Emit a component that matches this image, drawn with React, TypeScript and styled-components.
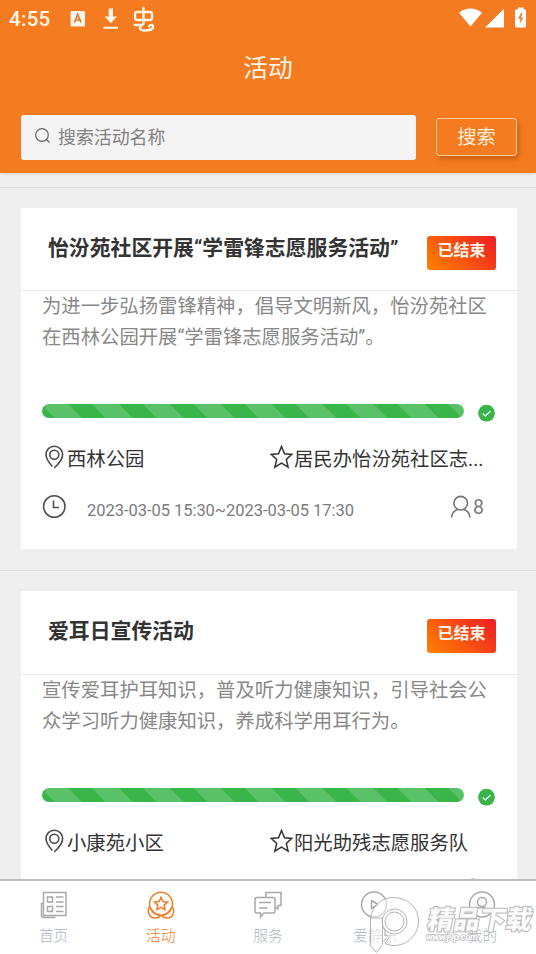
import React from "react";
import styled, { createGlobalStyle } from "styled-components";

const ORANGE = "#f47b1f";

const GlobalStyle = createGlobalStyle`
  * { box-sizing: border-box; }
  body {
    margin: 0;
    background: #efefef;
    font-family: Roboto, "Noto Sans CJK SC", sans-serif;
    color: #333;
  }
`;

const Screen = styled.div`
  position: relative;
  width: 536px;
  height: 954px;
  overflow: hidden;
  display: flex;
  flex-direction: column;
  background: #efefef;
`;

const Header = styled.header`
  flex: none;
  height: 173px;
  background: ${ORANGE};
  color: #fff5e8;
  box-shadow: 0 1px 3px rgba(0, 0, 0, 0.12);
`;

const StatusBar = styled.div`
  height: 37px;
  padding: 0 8px 0 9px;
  display: flex;
  align-items: center;
  justify-content: space-between;
`;

const StatusGroup = styled.div`
  display: flex;
  align-items: center;
`;

const Time = styled.span`
  width: 61px;
  font-size: 20.5px;
  font-weight: 500;
  letter-spacing: 0.3px;
  line-height: 37px;
  padding-top: 1px;
`;

const Title = styled.h1`
  margin: 0;
  height: 60px;
  font-size: 24.7px;
  font-weight: 400;
  line-height: 63px;
  text-align: center;
`;

const SearchRow = styled.div`
  display: flex;
  align-items: center;
  padding: 18px 19px 0 21px;
  justify-content: space-between;
`;

const SearchField = styled.div`
  width: 395px;
  height: 45px;
  padding: 0 0 4px 14px;
  display: flex;
  align-items: center;
  gap: 7px;
  border-radius: 3px;
  background: #f4f4f4;
  color: #808080;
  font-size: 17.9px;
`;

const SearchButton = styled.button`
  width: 81px;
  height: 38px;
  margin-bottom: 1px;
  padding: 0 0 2px;
  border: 1px solid #ffc792;
  border-radius: 3px;
  background: ${ORANGE};
  box-shadow: 2px 3px 4px rgba(120, 50, 0, 0.35);
  color: #fff0dd;
  font: 400 19.3px Roboto, "Noto Sans CJK SC", sans-serif;
`;

const Feed = styled.main`
  flex: 1;
  min-height: 0;
  overflow: hidden;
  padding-top: 14px;
`;

const Entry = styled.section`
  height: 383.4px;
  padding: 20px 19px 0 21px;
  border-top: 1px solid #dedede;
`;

const Card = styled.article`
  height: 341.4px;
  background: #fff;
`;

const CardHead = styled.div`
  height: 83.3px;
  padding: 0 21px 0 27px;
  display: flex;
  justify-content: space-between;
  border-bottom: 1px solid #e9e9e9;
`;

const CardTitle = styled.h2`
  margin: 0;
  padding-top: 25px;
  font-size: 20.85px;
  line-height: 31px;
  font-weight: 700;
  white-space: nowrap;
`;

const Badge = styled.span`
  width: 69px;
  height: 34px;
  margin-top: 28px;
  border-radius: 3px;
  background: linear-gradient(45deg, #ff8300, #ee1c25);
  color: #fff3e6;
  font-size: 16px;
  font-weight: 700;
  line-height: 29px;
  text-align: center;
`;

const Summary = styled.p`
  margin: 0;
  height: 113px;
  padding: 0 21px;
  color: #888;
  font-size: 19.35px;
  line-height: 31px;
  white-space: nowrap;
`;

const Progress = styled.div`
  display: flex;
  align-items: flex-start;
  padding: 0 22px 0 21px;
  justify-content: space-between;
`;

const Bar = styled.div`
  width: 422px;
  height: 14px;
  border-radius: 7px;
  background: repeating-linear-gradient(
    45deg,
    #39b54a 0,
    #39b54a 8.8px,
    #59c167 9.4px,
    #59c167 28px,
    #39b54a 28.6px,
    #39b54a 36px
  );
`;

const InfoRow = styled.div`
  display: flex;
  height: 38px;
  margin-top: 18px;
  padding-left: 24px;
  font-size: 19.35px;
  color: #333;
`;

const Info = styled.div<{ $width: number }>`
  width: ${(p) => p.$width}px;
  display: flex;
  align-items: flex-start;
  line-height: 40px;
  white-space: nowrap;
  svg { flex: none; margin-top: 5px; }
`;

const TimeRow = styled.div`
  display: flex;
  height: 48px;
  margin-top: 5.4px;
  padding: 0 33px 0 21px;
  align-items: center;
  color: #7b7b7b;
  svg { flex: none; margin-bottom: 2px; }
`;

const DateText = styled.span`
  flex: 1;
  padding: 5px 0 0 20px;
  font-size: 16.5px;
  letter-spacing: -0.04px;
`;

const Count = styled.span`
  display: flex;
  align-items: center;
  gap: 1px;
  font-size: 19.5px;
`;

const TabBar = styled.nav`
  flex: none;
  height: 75px;
  display: grid;
  grid-template-columns: repeat(5, 1fr);
  border-top: 2px solid #bcbcbc;
  background: #fff;
`;

const Tab = styled.div<{ $active?: boolean }>`
  display: flex;
  flex-direction: column;
  align-items: center;
  padding-top: 10px;
  gap: 6px;
  color: ${(p) => (p.$active ? ORANGE : "#aeb4c2")};
  font-size: 14.7px;
  line-height: 22px;
  font-weight: 300;
  svg { color: ${(p) => (p.$active ? ORANGE : "#a8a8a8")}; }
`;

const Watermark = styled.div`
  position: absolute;
  left: 368px;
  top: 893px;
  width: 168px;
  height: 61px;
`;

const MarkName = styled.div`
  position: absolute;
  left: 60px;
  top: 10px;
  font-size: 26px;
  line-height: 34px;
  font-weight: 900;
  white-space: nowrap;
  transform: skewX(-10deg);
  color: rgba(255, 255, 255, 0.9);
  -webkit-text-stroke: 2px #b9b9b9;
  paint-order: stroke fill;
`;

const MarkUrl = styled.div`
  position: absolute;
  left: 58px;
  top: 38px;
  font-size: 9.5px;
  line-height: 12px;
  font-weight: 700;
  font-style: italic;
  letter-spacing: -0.4px;
  color: #fff;
  -webkit-text-stroke: 1.4px #bdbdbd;
  paint-order: stroke fill;
`;

type GlyphProps = { w: number; h: number; box: string; line?: number; color?: string; children: React.ReactNode };
const Glyph = ({ w, h, box, line = 1.6, color = "currentColor", children }: GlyphProps) => (
  <svg width={w} height={h} viewBox={box} fill="none" stroke={color} strokeWidth={line}>
    {children}
  </svg>
);

const StatusLeftIcons = () => (
  <svg width="86" height="26" viewBox="70 5.5 86 26" fill="none">
    <rect x="70.5" y="10.5" width="14.5" height="15.5" rx="1.5" fill="#fff5e8" />
    <path d="M74.5 22 77.7 14 81 22M75.7 19.5h4" stroke="#d97a35" strokeWidth="1.7" />
    <path d="M108.7 8h4.3v8h4l-6.2 6.8-6.2-6.8h4.1zM103.5 26.2h14.5v2h-14.500z" fill="#fff5e8" />
    <path
      d="M143.500 7.500v16M136.500 11.500h13.500q2 0 2 2v4q0 2-2 2h-12.500q-2.500 0-2.500-2v-4q0-2 1.500-2M134.500 24.500h7.500q-3 2.500-1.500 4.500 1.500 1.500 5 1 6.500-.3 7.500-3 .5-2.500-1.800-2.500-2 0-2 1.500"
      stroke="#fff5e8"
      strokeWidth="2.3"
      strokeLinecap="round"
    />
  </svg>
);

const StatusRightIcons = () => (
  <svg width="70" height="24" viewBox="458 6.5 70 24">
    <path d="M459 12.2q11.500-8.400 23 0L470.500 26zM485 27 504 8.300V27z" fill="#fff" />
    <path d="M518 7h5.500v1.700h1q1.500 0 1.500 1.500V25.500q0 1.500-1.500 1.500h-8q-1.500 0-1.500-1.500V10.200q0-1.500 1.500-1.500h1.500z" fill="#fff" />
    <path d="M521 12.500 518 18.200h2.300l-.5 5 3.500-6.200h-2.300l1.500-4.500z" fill="#e98235" />
  </svg>
);

const SearchIcon = () => (
  <Glyph w={16} h={16} box="0 0 16 16" line={1.2} color="#666">
    <circle cx="7" cy="7" r="6.3" />
    <path d="m11.500 11.500 3 3" />
  </Glyph>
);

const PinIcon = () => (
  <Glyph w={22} h={26} box="0 0 22 26" line={1.6} color="#4a4a4a">
    <path d="M7.300 21.500C3.800 17.500 1 13.300 1 9.500a8.300 8.300 0 0 1 16.600 0c0 4.500-4 9.500-8.400 13.500" />
    <circle cx="9.3" cy="9.7" r="4.5" />
  </Glyph>
);

const StarIcon = () => (
  <Glyph w={24} h={26} box="0 0 24 26" line={1.5}>
    <path d="m11.500 1.500 3 7.300 7.300.6-5.500 5.100 1.800 7.700-6.600-4-6.600 4 1.800-7.700-5.500-5.100 7.300-.6z" />
  </Glyph>
);

const ClockIcon = () => (
  <Glyph w={25} h={25} box="0 0 25 25" line={1.6} color="#505050">
    <circle cx="12.3" cy="12.5" r="10.7" />
    <path d="M11.500 6.500V13.500h5.500" />
  </Glyph>
);

const PersonIcon = () => (
  <Glyph w={22} h={24} box="0 0 22 24" line={1.6} color="#737373">
    <circle cx="10.7" cy="8.2" r="6.8" />
    <path d="M1.500 22.500c.5-4.500 3-7 6.200-8M13.800 14.500c3.400 1 5.700 3.500 6.200 8" />
  </Glyph>
);

const DoneIcon = () => (
  <svg width="17" height="18" viewBox="0 0 17 18" fill="none">
    <circle cx="8.5" cy="9.2" r="8.4" fill="#39b54a" />
    <path d="m4.700 9.500 2.700 2.500 4.900-4.800" stroke="#fff" strokeWidth="1.2" />
  </svg>
);

const HomeIcon = () => (
  <Glyph w={28} h={28} box="0 0 28 28" line={1.5}>
    <path d="M3.500 1.500h22.500v23H3.500zM3.500 12.500h-2v12q0 2 3 2h11" />
    <path d="M7.500 6h5v5h-5zM7.500 15.500h5v5h-5zM16 6h7.500M16 11h7.500M16 15.500h7.500M16 20.500h7.500" />
  </Glyph>
);

const ActivityIcon = () => (
  <Glyph w={28} h={28} box="0 0 28 28" line={1.5}>
    <circle cx="14" cy="12.8" r="11.5" />
    <path d="m14 6.300 1.900 4.200 4.600.5-3.400 3.100.9 4.500-4-2.300-4 2.300.9-4.500-3.400-3.100 4.600-.5z" />
    <path d="M2.600 15.500c-2 3.500-1.400 7.200.6 9.700 2 2.400 5.400 2 8.900.8 1.500-.8 1.200-1.600-.4-2.200C8 23 5 20 2.600 15.500ZM25.400 15.500c2 3.500 1.400 7.200-.6 9.700-2 2.400-5.400 2-8.900.8-1.500-.8-1.200-1.600.4-2.200 3.700-.8 6.700-3.800 9.100-8.300Z" />
  </Glyph>
);

const ServiceIcon = () => (
  <Glyph w={28} h={28} box="0 0 28 28" line={1.5}>
    <path d="M2.500 6.500h17q1.500 0 1.500 1.500v12.500q0 1.500-1.500 1.500H10l-3.500 4v-4h-4Q1 22 1 20.500V8q0-1.500 1.500-1.500ZM12 6.500v-5h15v13h-3v3.500l-3-2.500M5 11.500h12M5 17h8.500" />
  </Glyph>
);

const PlayIcon = () => (
  <Glyph w={28} h={28} box="0 0 28 28" line={1.5}>
    <circle cx="13" cy="13.5" r="12.5" />
    <path d="M10.500 9.500 17 13.500l-6.500 4z" strokeLinejoin="round" />
  </Glyph>
);

const MineIcon = () => (
  <Glyph w={28} h={28} box="0 0 28 28" line={1.5}>
    <circle cx="14" cy="13.5" r="12.5" />
    <circle cx="14" cy="11" r="4.5" />
    <path d="M5.500 22c1-4 4-5.500 8.500-5.500s7.500 1.500 8.500 5.500" />
  </Glyph>
);

const WatermarkLogo = () => (
  <svg width="54" height="61" viewBox="0 0 54 61" fill="#fff" fillOpacity=".55" stroke="#b3b3b3" strokeWidth="1">
    <path d="M2.500 25C5 12 13.500 4.500 25.500 4.500c14 0 25 10.200 25 23.500 0 13-10.500 24.500-24.500 24.500-4 0-7-1-9-2l4-6-4-4v-4l-2.500-2v17l-6 8-6-7z" />
    <circle cx="26.5" cy="28.5" r="12.5" />
    <circle cx="26.5" cy="28.5" r="9.5" />
    <path d="M2.500 25h12M14.500 25v26" />
  </svg>
);

const activities = [
  {
    title: "怡汾苑社区开展“学雷锋志愿服务活动”",
    lines: ["为进一步弘扬雷锋精神，倡导文明新风，怡汾苑社区", "在西林公园开展“学雷锋志愿服务活动”。"],
    place: "西林公园",
    host: "居民办怡汾苑社区志...",
    time: "2023-03-05 15:30~2023-03-05 17:30",
    count: 8,
  },
  {
    title: "爱耳日宣传活动",
    lines: ["宣传爱耳护耳知识，普及听力健康知识，引导社会公", "众学习听力健康知识，养成科学用耳行为。"],
    place: "小康苑小区",
    host: "阳光助残志愿服务队",
    time: "",
    count: null,
  },
];

const tabs = [
  { label: "首页", icon: <HomeIcon /> },
  { label: "活动", icon: <ActivityIcon />, active: true },
  { label: "服务", icon: <ServiceIcon /> },
  { label: "爱静乐", icon: <PlayIcon /> },
  { label: "我的", icon: <MineIcon /> },
];

export default function App() {
  return (
    <Screen>
      <GlobalStyle />
      <Header>
        <StatusBar>
          <StatusGroup>
            <Time>4:55</Time>
            <StatusLeftIcons />
          </StatusGroup>
          <StatusRightIcons />
        </StatusBar>
        <Title>活动</Title>
        <SearchRow>
          <SearchField>
            <SearchIcon />
            搜索活动名称
          </SearchField>
          <SearchButton>搜索</SearchButton>
        </SearchRow>
      </Header>
      <Feed>
        {activities.map((a) => (
          <Entry key={a.title}>
            <Card>
              <CardHead>
                <CardTitle>{a.title}</CardTitle>
                <Badge>已结束</Badge>
              </CardHead>
              <Summary>
                {a.lines[0]}
                <br />
                {a.lines[1]}
              </Summary>
              <Progress>
                <Bar />
                <DoneIcon />
              </Progress>
              <InfoRow>
                <Info $width={225}>
                  <PinIcon />
                  {a.place}
                </Info>
                <Info $width={220}>
                  <StarIcon />
                  {a.host}
                </Info>
              </InfoRow>
              <TimeRow>
                <ClockIcon />
                <DateText>{a.time}</DateText>
                <Count>
                  <PersonIcon />
                  {a.count}
                </Count>
              </TimeRow>
            </Card>
          </Entry>
        ))}
      </Feed>
      <TabBar>
        {tabs.map((t) => (
          <Tab key={t.label} $active={t.active}>
            {t.icon}
            {t.label}
          </Tab>
        ))}
      </TabBar>
      <Watermark>
        <WatermarkLogo />
        <MarkName>精品下载</MarkName>
        <MarkUrl>www.j9p.com</MarkUrl>
      </Watermark>
    </Screen>
  );
}
